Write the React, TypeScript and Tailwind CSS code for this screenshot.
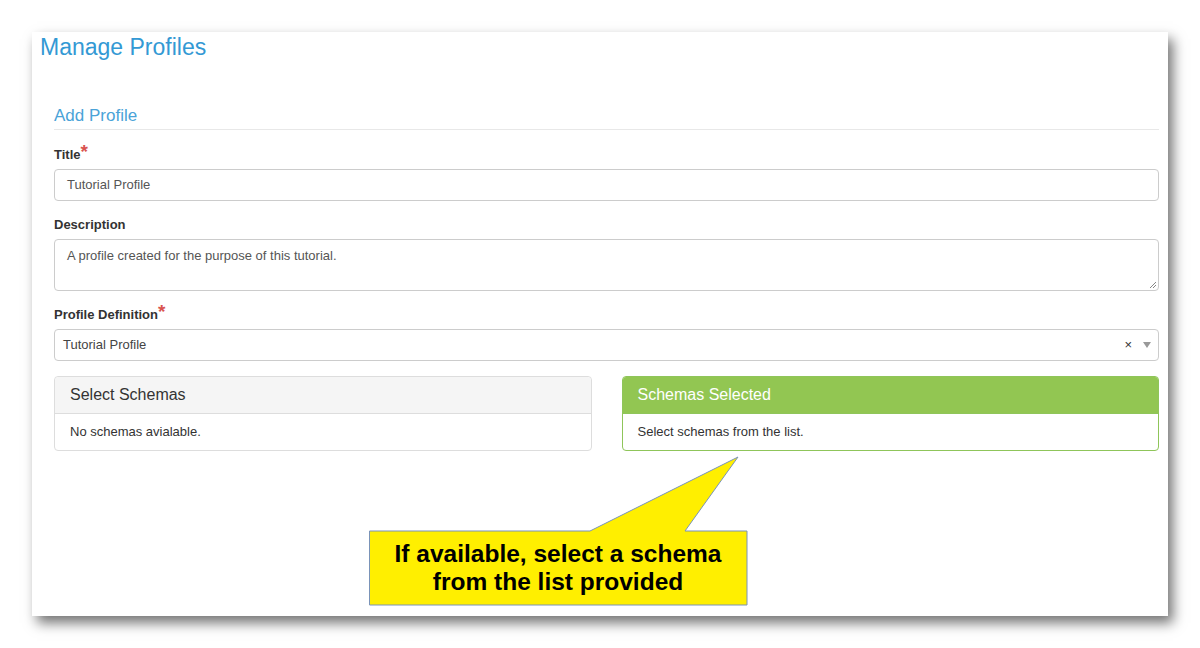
export default function App() {
  return (
    <div className="w-[1200px] h-[648px] bg-white pt-[32px] pl-[32px] font-['Liberation_Sans',Arial,sans-serif]">
      <div className="relative w-[1136px] h-[584px] bg-white shadow-[5px_7px_12px_rgba(0,0,0,0.55)]">
        {/* Page title */}
        <h1 className="pl-[8px] text-[23px] leading-[30px] text-[#3399d4]">Manage Profiles</h1>

        <div className="pl-[22px] pr-[9px]">
          {/* Section title */}
          <div className="mt-[43px] border-b border-[#e8e8e8] pb-[2px]">
            <h2 className="text-[17px] leading-[22px] text-[#4aa3d8]">Add Profile</h2>
          </div>

          <Label text="Title" required className="mt-[17px]" />
          <div className="mt-[6px] h-[32px] rounded-[4px] border border-[#ccc] px-[12px] flex items-center text-[13px] text-[#555]">
            Tutorial Profile
          </div>

          <Label text="Description" className="mt-[16px]" />
          <div className="relative mt-[6px] h-[52px] rounded-[4px] border border-[#ccc] px-[12px] pt-[6px] text-[13px] text-[#555]">
            A profile created for the purpose of this tutorial.
            <svg className="absolute right-[1px] bottom-[1px]" width="9" height="9" viewBox="0 0 9 9">
              <path d="M8 2L2 8M8 5L5 8" stroke="#888" strokeWidth="1" />
            </svg>
          </div>

          <Label text="Profile Definition" required className="mt-[16px]" />
          <div className="mt-[6px] h-[32px] rounded-[4px] border border-[#ccc] pl-[8px] pr-[6px] flex items-center text-[13px] text-[#444]">
            <span className="flex-1">Tutorial Profile</span>
            <span className="text-[13px] text-[#333] mr-[10px]">×</span>
            <svg width="10" height="8" viewBox="0 0 10 8">
              <path d="M1 1h8L5 7z" fill="#999" />
            </svg>
          </div>

          {/* Schema panels */}
          <div className="mt-[15px] grid grid-cols-2 gap-[30px]">
            <div className="rounded-[4px] border border-[#ddd]">
              <div className="h-[37px] bg-[#f5f5f5] border-b border-[#ddd] px-[15px] flex items-center text-[16px] text-[#333] rounded-t-[4px]">
                Select Schemas
              </div>
              <div className="h-[36px] px-[15px] flex items-center text-[13px] text-[#333]">No schemas avialable.</div>
            </div>
            <div className="rounded-[4px] border border-[#8fc55a]">
              <div className="h-[37px] bg-[#92c652] border-b border-[#8fc55a] px-[15px] flex items-center text-[16px] text-white rounded-t-[3px]">
                Schemas Selected
              </div>
              <div className="h-[36px] px-[15px] flex items-center text-[13px] text-[#333]">Select schemas from the list.</div>
            </div>
          </div>
        </div>

        {/* Callout annotation */}
        <div className="absolute left-[337px] top-[424px] w-[380px] h-[152px]">
          <svg className="absolute inset-0" width="380" height="152" viewBox="0 0 380 152">
            <polygon
              points="0.5,75 221,75 369,1 316,75 378,75 378,149 0.5,149"
              fill="#ffef00"
              stroke="#7a93b8"
              strokeWidth="1"
            />
          </svg>
          <div className="absolute left-0 top-[75px] w-[378px] h-[74px] flex flex-col items-center justify-center text-[24.5px] leading-[28px] font-bold text-black">
            <span>If available, select a schema</span>
            <span>from the list provided</span>
          </div>
        </div>
      </div>
    </div>
  );
}

function Label({ text, required, className }: { text: string; required?: boolean; className?: string }) {
  return (
    <div className={`text-[13px] leading-[16px] font-bold text-[#333] ${className ?? ""}`}>
      {text}
      {required && <span className="text-[#d9534f] text-[19px] leading-[10px] align-top font-bold">*</span>}
    </div>
  );
}
